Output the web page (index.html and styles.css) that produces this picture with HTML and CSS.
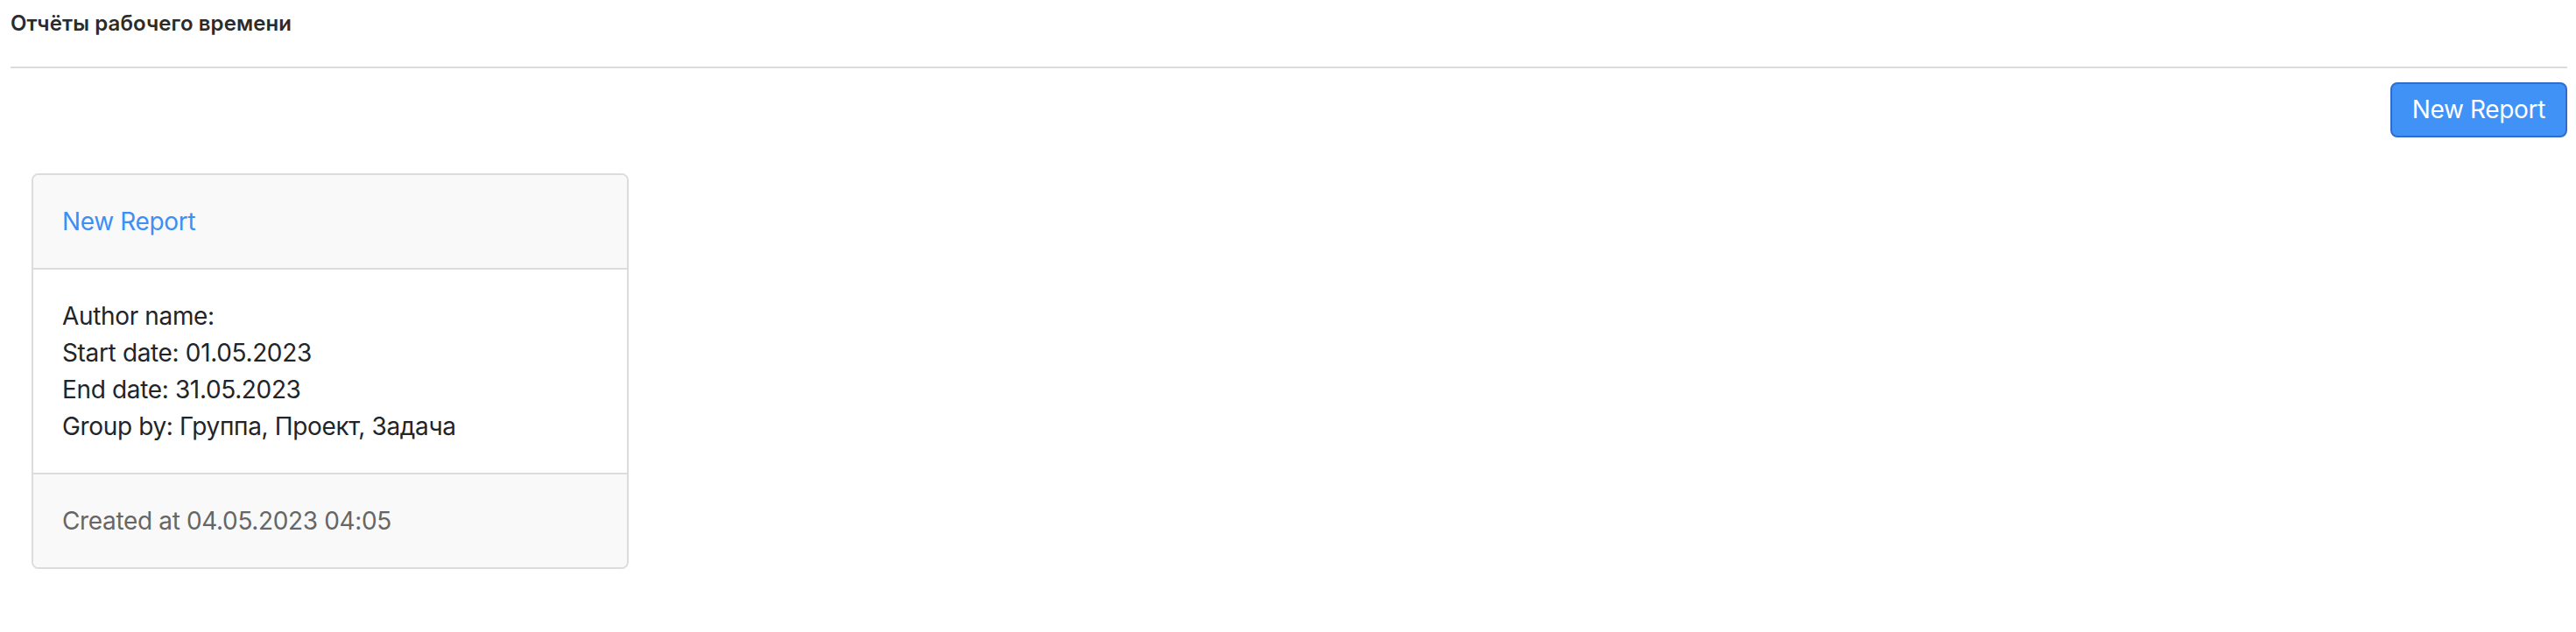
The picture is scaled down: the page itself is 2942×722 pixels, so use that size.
FILE: index.html
```html
<!DOCTYPE html>
<html lang="ru">
<head>
    <meta charset="UTF-8" />
    <meta name="viewport" content="width=device-width, initial-scale=1.0"/>
    <title>Отчёты рабочего времени</title>
    <link rel="stylesheet" href="styles.css">
</head>
<body>
<div class="page">
    <h1 class="page-title">Отчёты рабочего времени</h1>
    <hr class="divider">

    <div class="toolbar">
        <button type="button" class="btn-primary">New Report</button>
    </div>

    <div class="report-list">
        <div class="report-card">
            <div class="report-card-header">
                <a href="#" class="report-link">New Report</a>
            </div>
            <div class="report-card-body">
                <div>Author name:</div>
                <div>Start date: 01.05.2023</div>
                <div>End date: 31.05.2023</div>
                <div>Group by: Группа, Проект, Задача</div>
            </div>
            <div class="report-card-footer">
                Created at 04.05.2023 04:05
            </div>
        </div>
    </div>
</div>
</body>
</html>
```

FILE: styles.css
```css
body {
    margin: 0;
    font-family: Inter, "Noto Sans", sans-serif;
    color: #212529;
    background: #fff;
}
.page {
    padding: 12px 10px 0 12px;
}
.page-title {
    margin: 0;
    font-size: 24px;
    line-height: 30px;
    font-weight: 600;
    letter-spacing: 0.1px;
    color: #2b2b2b;
}
.divider {
    margin: 34px 0 0 0;
    border: 0;
    height: 2px;
    background: #dcdcdc;
}
.toolbar {
    display: flex;
    justify-content: flex-end;
    margin-top: 16px;
}
.btn-primary {
    font-family: inherit;
    font-size: 28px;
    line-height: 43px;
    letter-spacing: -0.35px;
    padding: 8px 23px;
    color: #fff;
    background: #4192f6;
    border: 2px solid #2f6ccb;
    border-radius: 8px;
    cursor: pointer;
}
.report-list {
    display: flex;
    margin-top: 41px;
    padding-left: 24px;
}
.report-card {
    width: 682px;
    box-sizing: border-box;
    border: 2px solid #dcdcdc;
    border-radius: 8px;
    overflow: hidden;
    font-size: 28px;
    line-height: 42px;
    letter-spacing: -0.35px;
}
.report-card-header {
    padding: 32px 33px;
    background: #f9f9f9;
    border-bottom: 2px solid #dcdcdc;
}
.report-link {
    color: #3d8ef5;
    text-decoration: none;
}
.report-card-body {
    padding: 32px 33px;
    background: #fff;
}
.report-card-footer {
    padding: 32px 33px;
    background: #f9f9f9;
    border-top: 2px solid #dcdcdc;
    color: #666;
}
```
